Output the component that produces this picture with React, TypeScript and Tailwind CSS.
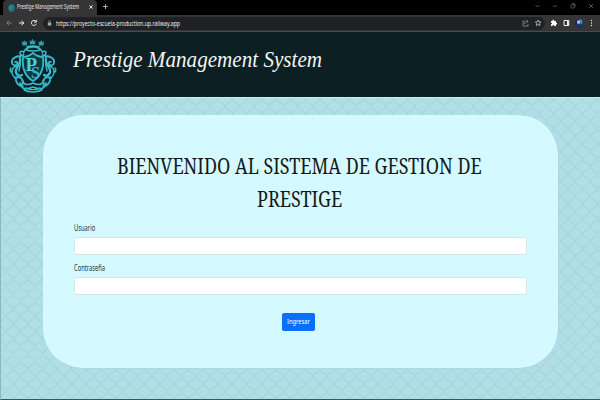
import { useLayoutEffect, useRef, useState } from "react";

type FitProps = { text: string; width: number; className?: string };

/* Squeezes or stretches one line of text to a given width. */
function FitText({ text, width, className = "" }: FitProps) {
  const ref = useRef<HTMLSpanElement>(null);
  const [scale, setScale] = useState(1);
  useLayoutEffect(() => {
    if (ref.current) setScale(width / ref.current.offsetWidth);
  }, [width, text]);
  return (
    <span className="block overflow-visible whitespace-nowrap" style={{ width }}>
      <span
        ref={ref}
        className={`inline-block origin-left ${className}`}
        style={{ transform: `scaleX(${scale})` }}
      >
        {text}
      </span>
    </span>
  );
}

function MiniCrest() {
  return (
    <svg className="h-[8px] w-[7px] shrink-0" viewBox="0 0 7 8" fill="none">
      <path d="M1.5 1.2h4M3.5 1.5 6 2.8 5.8 6 3.5 7.5 1.2 6 1 2.8Z" fill="#0b5a66" stroke="#2aa3b5" strokeWidth=".9" />
      <path d="M2.8 3v3M3 3.2h1v1.3H3" stroke="#3fc4d4" strokeWidth=".6" />
    </svg>
  );
}

function Crest() {
  return (
    <svg className="h-[56px] w-[48px] shrink-0" viewBox="0 0 48 56" fill="none" stroke="#38b9ca" strokeLinecap="round" strokeLinejoin="round">
      <g fill="#2f9fae" stroke="none">
        <path d="M12.500 3l1.800 1.500L15 2l1.500 2.300L18 3l-.2 4.500h-4.300Z" />
        <path d="M20.500 2l1.700 1.500L23.500.8l1.400 2.700L26.500 2 26 6.300h-5Z" />
        <path d="M29.500 3l1.400 1.300L32.500 2l.8 2.500L35.300 3l-1 4.500H30Z" />
      </g>
      <path d="M14.500 14c2-3.500 5-5 9.500-5s7.500 1.500 9.500 5M16 11.500c5 2 11 2 16 0M18 8.700c4-1 8-1 12 0" strokeWidth="1.500" />
      <path d="M14 19c5 0 7-1.500 10-4 3 2.500 5 4 10 4 1 9 0 18-10 24-10-6-11-15-10-24Z" fill="#0b3a42" strokeWidth="1.800" />
      <path d="M15 14c-4-2-5 1-3 3 2 1.500 3 0 2.500-1M33 14c4-2 5 1 3 3-2 1.500-3 0-2.500-1" strokeWidth="1.600" />
      <path d="M12 18c-6 0-10 3-9 7 .5 3 4 3 5 1s-.5-3-2-2M36 18c6 0 10 3 9 7-.5 3-4 3-5 1s.5-3 2-2" strokeWidth="1.800" />
      <path d="M11 20c1.500 5-3 8-4 12s3 7 6 5M37 20c-1.500 5 3 8 4 12s-3 7-6 5" strokeWidth="2.300" />
      <path d="M8 28c-3 0-5 3-5 6s2 6 5 6M40 28c3 0 5 3 5 6s-2 6-5 6M11 24c1 4-1 6-1 9M37 24c-1 4 1 6 1 9M2 30c-1 1-1 3 0 4M46 30c1 1 1 3 0 4" strokeWidth="1.500" />
      <path d="M6 40c4-2 7 0 8 3s-2 4-3 2M42 40c-4-2-7 0-8 3s2 4 3 2M7 39c-1 5 2 9 7 9M41 39c1 5-2 9-7 9" strokeWidth="1.700" />
      <path d="M13 43c3 5 7 4 11 2 4 2 8 3 11-2M12 48c3 5 8 2 12 1 4 1 9 4 12-1M15 52c5 2.500 13 2.500 18 0M17 50c4 2 10 2 14 0" strokeWidth="1.500" />
      <text x="16.500" y="33" fontFamily="Liberation Serif, serif" fontSize="19" fontWeight="700" fill="#4bcfdd" stroke="none">P</text>
      <text x="22" y="39.500" fontFamily="Liberation Serif, serif" fontSize="16" fontWeight="700" fill="#38b9ca" stroke="none">S</text>
    </svg>
  );
}

function Pattern() {
  return (
    <svg className="absolute inset-0 h-full w-full">
      <defs>
        <pattern id="scales" x="5" y="1" width="14.600" height="15" patternUnits="userSpaceOnUse">
          <path
            d="M7.300 0C7.300 2.800 0 4.700 0 7.500S7.300 12.200 7.300 15M7.300 0C7.300 2.800 14.600 4.700 14.600 7.500S7.300 12.200 7.300 15"
            fill="none"
            stroke="#a2d5db"
            strokeWidth="1"
          />
        </pattern>
      </defs>
      <rect width="100%" height="100%" fill="url(#scales)" />
    </svg>
  );
}

function Browser() {
  return (
    <div className="flex h-8 shrink-0 flex-col bg-black font-['Noto_Sans',sans-serif]">
      <div className="flex h-[15px] justify-between">
        <div className="flex">
          <div className="ml-[3px] flex h-[15px] w-[94px] items-center rounded-t-[4px] bg-[#353535] pl-[5px]">
            <MiniCrest />
            <div className="-mt-[2px] ml-[2px] w-[65px] text-[6.200px] leading-[10px] text-[#e6e6e6]">
              <FitText text="Prestige Management System" width={62} />
            </div>
            <svg className="-mt-px ml-[7px] h-[4px] w-[4px]" viewBox="0 0 4 4" stroke="#eee" strokeWidth=".9"><path d="M.4.4l3.200 3.200M3.600.4.4 3.600" /></svg>
          </div>
          <svg className="mt-[4px] ml-[6px] h-[5px] w-[5px]" viewBox="0 0 5 5" stroke="#bbb" strokeWidth=".9"><path d="M2.500 0v5M0 2.500h5" /></svg>
        </div>
        <svg className="h-[12px] w-[68px]" viewBox="0 0 68 12" fill="none" stroke="#666" strokeWidth=".8">
          <path d="M3.500 5l2 2 2-2M21 6.200h4M57 4l4 4M61 4l-4 4" />
          <rect x="39" y="4.500" width="3.200" height="3.500" rx=".7" />
          <path d="M40 3.800h3v3.500" />
        </svg>
      </div>
      <div className="flex h-[17px] items-center border-b border-[#4a4a4a] bg-[#353535]">
        <svg className="h-[16px] w-[43px] shrink-0" viewBox="0 0 43 16" fill="none" strokeWidth="1">
          <path d="M11.500 8H6.800M9 5.700 6.700 8 9 10.300" stroke="#858585" />
          <path d="M19 8h4.700M21.500 5.700 23.800 8l-2.300 2.300" stroke="#eee" />
          <path d="M36 6.500a2.500 2.500 0 1 0 .3 2.300M36.300 4.900v2.200h-2.200" stroke="#eee" />
        </svg>
        <div className="flex h-[13px] w-[502px] items-center rounded-full bg-[#202124] pl-[4px]">
          <svg className="h-[6px] w-[5px]" viewBox="0 0 5 6"><path d="M.8 2.500h3.400v3H.8Z" fill="#aaa" /><path d="M1.500 2.500V1.500a1 1 0 0 1 2 0v1" fill="none" stroke="#aaa" strokeWidth=".6" /></svg>
          <div className="ml-[4px] grow text-[7px] leading-[11px] text-[#eeeeee]">
            <FitText text="https://proyecto-escuela-production.up.railway.app" width={124} />
          </div>
          <svg className="mr-[3px] h-[8px] w-[20px]" viewBox="0 0 20 8" fill="none" stroke="#a5a5a5" strokeWidth=".7">
            <path d="M2.500 2H1v5h5V5M2.600 5c0-2 1.200-2.700 3-2.700M4.500 1l1.600 1.300L4.500 3.700" />
            <path d="m16.200 1 .8 1.900 2 .2-1.500 1.400.5 2-1.800-1-1.800 1 .5-2-1.500-1.400 2-.2Z" stroke="#ddd" />
          </svg>
        </div>
        <svg className="h-[16px] w-[55px]" viewBox="0 0 55 16" fill="none">
          <path d="M6 6h1.500c-.5-1.600 2-1.600 1.600 0H11v1.800c1.600-.3 1.600 1.900 0 1.600V11H9c.3-1.400-1.700-1.400-1.400 0H6V9.300c1.300.2 1.300-1.700 0-1.500Z" fill="#fff" />
          <path d="M19 5.500h4.800v5H19Z" stroke="#eee" />
          <path d="M22 5.500h1.800v5H22Z" fill="#eee" />
          <circle cx="34" cy="8" r="4" fill="#172b60" />
          <path d="M34.500 4c3 0 4 4 1.500 6Z" fill="#2f9fc4" />
          <path d="M32.300 5.500h2.500v3.200h-2.500Z" fill="#e7ccd8" />
          <path d="M31.300 10.500 33.500 8.800l2 2.500Z" fill="#2644a5" />
          <g fill="#eee"><circle cx="46.500" cy="5.500" r=".65" /><circle cx="46.500" cy="8" r=".65" /><circle cx="46.500" cy="10.500" r=".65" /></g>
        </svg>
      </div>
    </div>
  );
}

function Field({ label, width, type }: { label: string; width: number; type: string }) {
  return (
    <label className="block h-[40px]">
      <div className="h-[17px] text-[8px] leading-[16px] text-[#26343a]">
        <FitText text={label} width={width} />
      </div>
      <input type={type} className="block h-[18px] w-full rounded-[2.500px] border border-[#d3e6ea] bg-white px-1 text-[7px]" />
    </label>
  );
}

export default function App() {
  return (
    <div className="flex h-[400px] w-[600px] flex-col overflow-hidden bg-[#b0e0e6]">
      <Browser />
      <header className="flex h-[65px] shrink-0 bg-[#0c1f23] pt-[6px] pl-[9px]">
        <Crest />
        <h1 className="ml-[16px] font-['Liberation_Serif',serif] text-[24px] leading-[42px] text-[#f2f4f4] italic">
          <FitText text="Prestige Management System" width={249} />
        </h1>
      </header>
      <main className="relative flex grow border-t border-b border-l border-t-[#c9edf0] border-b-[#345a60] border-l-[#8fb5ba]">
        <Pattern />
        <section className="relative mt-[17px] ml-[41.500px] h-[254px] w-[516px] rounded-[40px] border-r-[1.500px] border-b-[1.500px] border-[#b0d3e8] bg-[#d4f9ff] pt-[34px] pr-[31px] pl-[31.500px] font-['Noto_Sans',sans-serif]">
          <h2 className="-ml-[2px] flex flex-col items-center font-['Noto_Serif','Liberation_Serif',serif] text-[22.500px] leading-[33px] text-[#14191c]">
            <FitText text="BIENVENIDO AL SISTEMA DE GESTION DE" width={365} />
            <FitText text="PRESTIGE" width={85} />
          </h2>
          <form className="mt-[5px]">
            <Field label="Usuario" width={21} type="text" />
            <Field label="Contraseña" width={31} type="password" />
            <div className="flex justify-center pr-[4px]">
              <button type="button" className="mt-[13px] flex h-[18px] w-[33px] items-center justify-center rounded-[2px] bg-[#0d6efd] text-[7.500px] text-white">
                <FitText text="Ingresar" width={23} />
              </button>
            </div>
          </form>
        </section>
      </main>
    </div>
  );
}
